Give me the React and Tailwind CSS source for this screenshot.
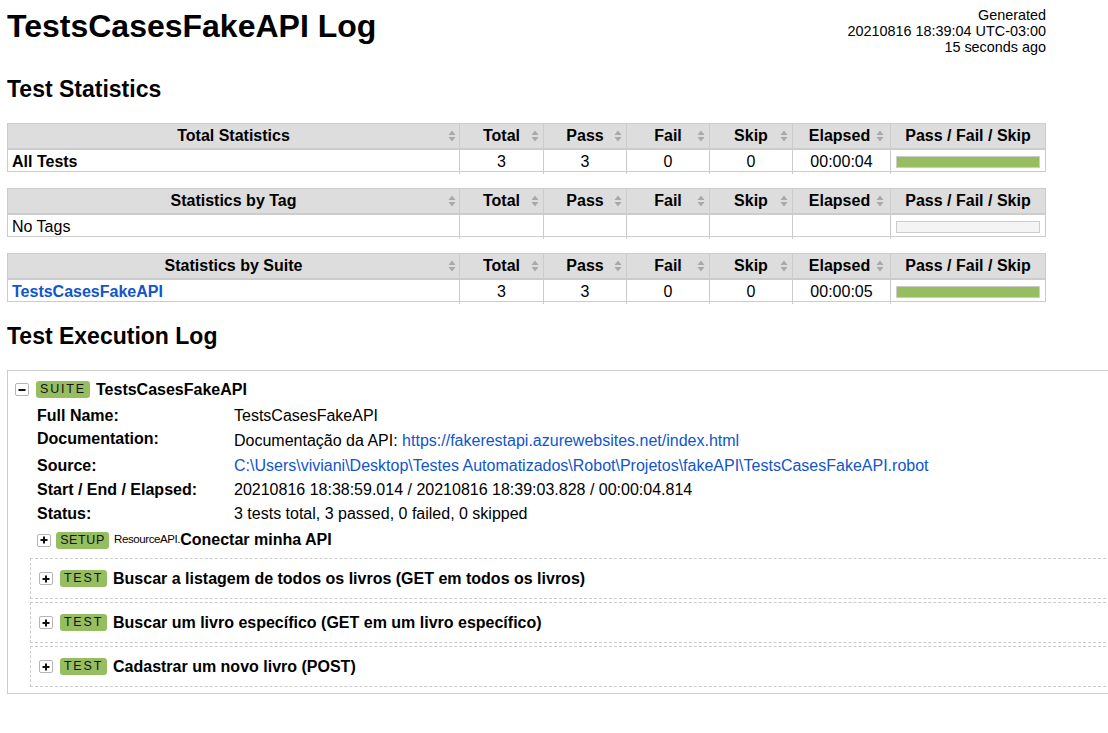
import React from 'react';

const LINK = 'text-[#1155cc]';

const SortIcon = ({ right = 'right-[3px]' }) => (
  <svg width="8" height="12" viewBox="0 0 8 12" className={`absolute ${right} top-1/2 -translate-y-1/2`}>
    <path d="M4 0.5L7.5 5H0.5Z" fill="#a8a8a8" />
    <path d="M0.5 7H7.5L4 11.5Z" fill="#a8a8a8" />
  </svg>
);

const Toggle = ({ open }) => (
  <div className="flex h-[13px] w-[14px] shrink-0 items-center justify-center rounded-[2px] border border-[#b5b5b5] bg-white">
    <svg width="8" height="8" viewBox="0 0 8 8">
      <rect x="0.5" y="3" width="7" height="2" fill="#111" />
      {!open && <rect x="3" y="0.5" width="2" height="7" fill="#111" />}
    </svg>
  </div>
);

const Badge = ({ children, tracking = 'tracking-[1.6px]', w }) => (
  <span className={`flex h-[17px] ${w} shrink-0 items-center justify-center rounded-[3px] bg-[#97bd61] text-[12.5px] leading-[13px] text-[#111] ${tracking}`}>
    {children}
  </span>
);

const cols = ['Total', 'Pass', 'Fail', 'Skip', 'Elapsed'];

const StatTable = ({ title, name, values, bar }) => (
  <div className="w-[1039px] border border-[#cccccc] text-[16px]">
    <div className="grid h-[26px] grid-cols-[451px_84px_83px_83px_83px_98px_155px] border-b-2 border-[#cccccc] bg-[#dddddd] font-bold">
      <div className="relative flex items-center justify-center">
        {title}
        <SortIcon />
      </div>
      {cols.map((c) => (
        <div key={c} className="relative flex items-center justify-center border-l border-[#cccccc]">
          <span className={c === 'Elapsed' ? 'mr-[4px]' : ''}>{c}</span>
          <SortIcon right={c === 'Elapsed' ? 'right-[6px]' : 'right-[4px]'} />
        </div>
      ))}
      <div className="flex items-center justify-center border-l border-[#cccccc]">Pass / Fail / Skip</div>
    </div>
    <div className="grid h-[21px] grid-cols-[451px_84px_83px_83px_83px_98px_155px]">
      <div className="flex items-center pl-[4px]">{name}</div>
      {cols.map((c, i) => (
        <div key={c} className="flex items-center justify-center border-l border-[#cccccc]">
          {values ? values[i] : ''}
        </div>
      ))}
      <div className="flex items-center border-l border-[#cccccc] px-[5px]">
        {bar ? (
          <div className="h-[12px] w-full border border-[#cccccc] bg-[#97bd61]" />
        ) : (
          <div className="h-[12px] w-full border border-[#cccccc] bg-[#f4f4f4]" />
        )}
      </div>
    </div>
  </div>
);

const TestBox = ({ name }) => (
  <div className="flex h-[41px] items-center border border-dashed border-[#cccccc] pl-[8px]">
    <Toggle />
    <span className="ml-[7px]">
      <Badge w="w-[47px]" tracking="tracking-[1.8px]">TEST</Badge>
    </span>
    <span className="ml-[6px] font-bold">{name}</span>
  </div>
);

export default function App() {
  return (
    <div className="h-[733px] w-[1108px] overflow-hidden bg-white px-[7px] font-['Liberation_Sans',Arial,Helvetica,sans-serif] text-black">
      <div className="flex w-[1039px] items-start justify-between">
        <h1 className="mt-[8px] text-[32px] font-bold leading-[36px]">TestsCasesFakeAPI Log</h1>
        <div className="mt-[7px] text-right text-[14.4px] leading-[16px]">
          <div>Generated</div>
          <div>20210816 18:39:04 UTC-03:00</div>
          <div>15 seconds ago</div>
        </div>
      </div>

      <h2 className="mt-[21px] text-[23px] font-bold leading-[26px]">Test Statistics</h2>

      <div className="mt-[21px] flex flex-col gap-[16px]">
        <StatTable
          title="Total Statistics"
          name={<span className="font-bold">All Tests</span>}
          values={['3', '3', '0', '0', '00:00:04']}
          bar
        />
        <StatTable title="Statistics by Tag" name="No Tags" />
        <StatTable
          title="Statistics by Suite"
          name={<span className={`font-bold ${LINK}`}>TestsCasesFakeAPI</span>}
          values={['3', '3', '0', '0', '00:00:05']}
          bar
        />
      </div>

      <h2 className="mt-[21px] text-[23px] font-bold leading-[26px]">Test Execution Log</h2>

      <div className="mt-[21px] w-[1130px] border border-[#cccccc] pb-[6px] pl-[7px] pt-[9px] text-[16px]">
        <div className="flex h-[19px] items-center">
          <Toggle open />
          <span className="ml-[7px]">
            <Badge w="w-[54px]" tracking="tracking-[1.8px]">SUITE</Badge>
          </span>
          <span className="ml-[6px] font-bold">TestsCasesFakeAPI</span>
        </div>

        <div className="ml-[22px] mt-[5px] leading-[20px]">
          <div className="flex h-[24px] items-center">
            <div className="w-[197px] font-bold">Full Name:</div>
            <div>TestsCasesFakeAPI</div>
          </div>
          <div className="flex h-[26px] items-start">
            <div className="w-[197px] pt-[1px] font-bold">Documentation:</div>
            <div className="pt-[3px]">
              Documentação da API: <span className={LINK}>https://fakerestapi.azurewebsites.net/index.html</span>
            </div>
          </div>
          <div className="flex h-[24px] items-center">
            <div className="w-[197px] font-bold">Source:</div>
            <div className={LINK}>
              C:\Users\viviani\Desktop\Testes Automatizados\Robot\Projetos\fakeAPI\TestsCasesFakeAPI.robot
            </div>
          </div>
          <div className="flex h-[24px] items-center">
            <div className="w-[197px] font-bold">Start / End / Elapsed:</div>
            <div>20210816 18:38:59.014 / 20210816 18:39:03.828 / 00:00:04.814</div>
          </div>
          <div className="flex h-[23px] items-center">
            <div className="w-[197px] font-bold">Status:</div>
            <div>3 tests total, 3 passed, 0 failed, 0 skipped</div>
          </div>
        </div>

        <div className="ml-[22px] mt-[4px] flex h-[22px] items-center">
          <Toggle />
          <span className="ml-[5px]">
            <Badge w="w-[53px]" tracking="tracking-[0.6px]">SETUP</Badge>
          </span>
          <span className="ml-[5px] text-[11.5px] tracking-[-0.4px]">ResourceAPI.</span>
          <span className="font-bold">Conectar minha API</span>
        </div>

        <div className="ml-[15px] mt-[7px] flex flex-col gap-[3px]">
          <TestBox name="Buscar a listagem de todos os livros (GET em todos os livros)" />
          <TestBox name="Buscar um livro específico (GET em um livro específico)" />
          <TestBox name="Cadastrar um novo livro (POST)" />
        </div>
      </div>
    </div>
  );
}
